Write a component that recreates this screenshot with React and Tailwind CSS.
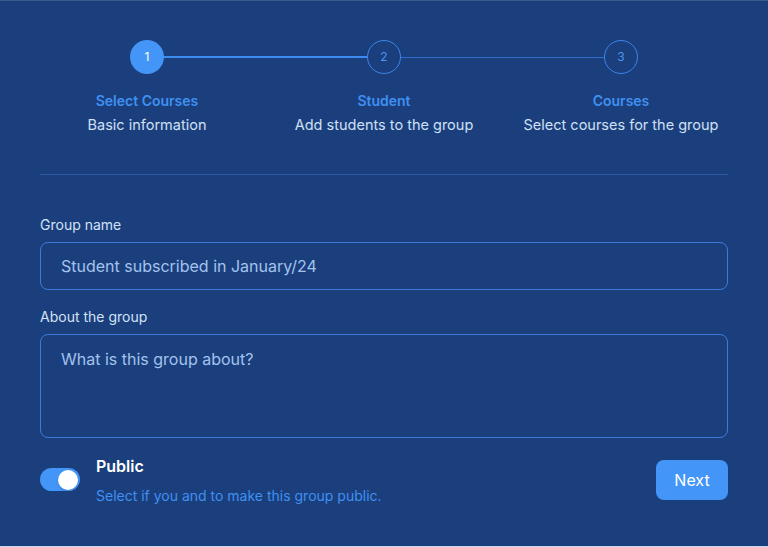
import React, { useState } from 'react';

const steps = [
  { n: 1, title: 'Select Courses', sub: 'Basic information' },
  { n: 2, title: 'Student', sub: 'Add students to the group' },
  { n: 3, title: 'Courses', sub: 'Select courses for the group' },
];

const Stepper = ({ current }) => (
  <div className="grid grid-cols-3 w-[711px] mx-auto">
    {steps.map((s, i) => (
      <div key={s.n} className="relative flex flex-col items-center">
        {/* connector to next step */}
        {i < steps.length - 1 && (
          <div
            className={
              i < current
                ? 'absolute top-[16px] left-1/2 w-full h-[2px] bg-[#3d8bf0]'
                : 'absolute top-[16.5px] left-1/2 w-full h-px bg-[#2f6cc8]'
            }
          />
        )}
        <div
          className={
            s.n === current
              ? 'relative z-10 w-[34px] h-[34px] rounded-full bg-[#4395f7] flex items-center justify-center text-[12px] text-white'
              : 'relative z-10 w-[34px] h-[34px] rounded-full border border-[#3b85ea] bg-[#1b3f7c] flex items-center justify-center text-[12px] text-[#4a94f2]'
          }
        >
          {s.n}
        </div>
        <div className="mt-[18px] text-[14px] font-semibold text-[#3f90f2] leading-[18px]">{s.title}</div>
        <div className="mt-[6px] text-[14.5px] text-[#cfe0f7] leading-[18px]">{s.sub}</div>
      </div>
    ))}
  </div>
);

export default function App() {
  const [isPublic, setIsPublic] = useState(true);

  return (
    <div
      className="w-[768px] h-[547px] bg-[#1b3f7c] border-t border-[#3a5a90] border-b border-b-[#c9d8ef] overflow-hidden"
      style={{ fontFamily: 'Inter, "Noto Sans", sans-serif' }}
    >
      <div className="pt-[39px]">
        <Stepper current={1} />
      </div>

      <div className="mx-10 mt-[40px] h-px bg-[#2857a3]" />

      <div className="px-10 pt-[40px]">
        <label className="block text-[14px] leading-[20px] text-[#d3e2f8]">Group name</label>
        <input
          className="mt-[7px] w-full h-[48px] rounded-lg border border-[#3b7ad9] bg-transparent px-5 text-[16px] text-[#d3e2f8] placeholder:text-[#a3c3ef] outline-none"
          placeholder="Student subscribed in January/24"
        />

        <label className="block mt-[17px] text-[14px] leading-[20px] text-[#d3e2f8]">About the group</label>
        <textarea
          className="mt-[7px] block w-full h-[104px] rounded-lg border border-[#3b7ad9] bg-transparent px-5 py-[12px] text-[16px] leading-[24px] text-[#d3e2f8] placeholder:text-[#a3c3ef] outline-none resize-none"
          placeholder="What is this group about?"
        />

        <div className="mt-[23px] flex items-start justify-between">
          <div className="flex items-start gap-4">
            <button
              onClick={() => setIsPublic(!isPublic)}
              className={
                isPublic
                  ? 'mt-[7px] w-[40px] h-[23px] rounded-full bg-[#4395f7] flex items-center justify-end px-[2px]'
                  : 'mt-[7px] w-[40px] h-[23px] rounded-full bg-[#2a5499] flex items-center justify-start px-[2px]'
              }
            >
              <span className="w-[20px] h-[20px] rounded-full bg-white shadow" />
            </button>
            <div>
              <div className="text-[16px] font-semibold leading-[20px] text-white -mt-[5px]">Public</div>
              <div className="mt-[10px] text-[14px] leading-[20px] text-[#3f90f2]">
                Select if you and to make this group public.
              </div>
            </div>
          </div>
          <button className="-mt-[1px] w-[72px] h-[40px] rounded-lg bg-[#4395f7] text-white text-[16px]">
            Next
          </button>
        </div>
      </div>
    </div>
  );
}
